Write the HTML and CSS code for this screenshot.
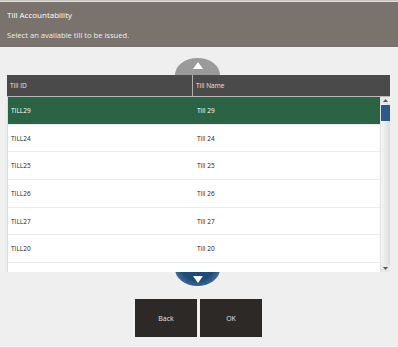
FILE: index.html
```html
<!DOCTYPE html>
<html>
<head>
<meta charset="utf-8">
<link rel="stylesheet" href="styles.css">
</head>
<body>
<div class="page">
  <div class="header">
    <div class="title">Till Accountability</div>
    <div class="subtitle">Select an available till to be issued.</div>
  </div>
  <div class="content">
    <div class="tablewrap">
      <div class="arrow up"><svg width="10" height="7" viewBox="0 0 10 7"><polygon points="5,0 10,7 0,7" fill="#fff"/></svg></div>
      <div class="arrow down"><svg width="10" height="7" viewBox="0 0 10 7"><polygon points="0,0 10,0 5,7" fill="#fff"/></svg></div>
      <div class="thead">
        <div class="th c1">Till ID</div>
        <div class="th c2">Till Name</div>
      </div>
      <div class="tbody">
        <div class="rows">
          <div class="row selected"><div class="td c1">TILL29</div><div class="td c2">Till 29</div></div>
          <div class="row"><div class="td c1">TILL24</div><div class="td c2">Till 24</div></div>
          <div class="row"><div class="td c1">TILL25</div><div class="td c2">Till 25</div></div>
          <div class="row"><div class="td c1">TILL26</div><div class="td c2">Till 26</div></div>
          <div class="row"><div class="td c1">TILL27</div><div class="td c2">Till 27</div></div>
          <div class="row"><div class="td c1">TILL20</div><div class="td c2">Till 20</div></div>
        </div>
        <div class="scrollbar">
          <div class="sbtn"><svg width="5" height="3" viewBox="0 0 5 3"><polygon points="2.5,0 5,3 0,3" fill="#555"/></svg></div>
          <div class="track"><div class="thumb"></div></div>
          <div class="sbtn"><svg width="5" height="3" viewBox="0 0 5 3"><polygon points="0,0 5,0 2.5,3" fill="#555"/></svg></div>
        </div>
      </div>
    </div>
    <div class="buttons">
      <div class="btn">Back</div>
      <div class="btn">OK</div>
    </div>
  </div>
</div>
</body>
</html>
```
FILE: styles.css
```css
html, body {
  margin: 0;
  padding: 0;
}
body {
  width: 398px;
  height: 348px;
  background: #efefef;
  font-family: "Open Sans", "DejaVu Sans", sans-serif;
  overflow: hidden;
}
.page {
  display: flex;
  flex-direction: column;
  height: 348px;
  border-top: 1px solid #c9c6c2;
  box-sizing: border-box;
}
.header {
  background: #7a726c;
  border-top: 1px solid #dcd9d5;
  height: 46px;
  box-sizing: border-box;
  padding: 7px 7px 0 7px;
  color: #fff;
}
.title {
  font-size: 8px;
  line-height: 11px;
}
.subtitle {
  font-size: 7.6px;
  line-height: 10px;
  margin-top: 10px;
  color: #f0eeec;
}
.content {
  flex: 1;
  display: flex;
  flex-direction: column;
  align-items: center;
  padding-top: 28px;
  border-bottom: 1px solid #d9d9d9;
}
.tablewrap {
  position: relative;
  width: 383px;
  margin-left: -1px;
  background: #fff;
}
.arrow {
  position: absolute;
  z-index: 1;
  left: 168px;
  width: 45px;
  height: 34px;
  border-radius: 50%;
  display: flex;
  justify-content: center;
  box-sizing: border-box;
}
.arrow.up {
  top: -17px;
  background: #9a9a9a;
  align-items: flex-start;
  padding-top: 4px;
}
.arrow.down {
  bottom: -14px;
  background: radial-gradient(ellipse at 50% 30%, #1d4c7b 55%, #6f8db0 100%);
  align-items: flex-end;
  padding-bottom: 3px;
}
.thead {
  position: relative;
  z-index: 2;
  display: flex;
  height: 22px;
  background: #4a4a4a;
  border-bottom: 1px solid #b8b8b8;
  box-sizing: border-box;
}
.th {
  color: #e8e8e8;
  font-size: 6.5px;
  line-height: 21px;
}
.c1 {
  width: 186px;
  padding-left: 3px;
  box-sizing: border-box;
}
.th.c1 {
  border-right: 1px solid #b0b0b0;
}
.c2 {
  flex: 1;
  padding-left: 3px;
}
.tbody {
  position: relative;
  z-index: 2;
  background: #fff;
  display: flex;
  height: 175px;
  overflow: hidden;
  border-left: 1px solid #dcdcdc;
}
.rows {
  flex: 1;
}
.row {
  display: flex;
  height: 27.7px;
  border-bottom: 1px solid #ececec;
  box-sizing: border-box;
  align-items: center;
}
.td {
  font-size: 6.5px;
  color: #222;
}
.row.selected {
  background: #2a6444;
}
.row.selected .td {
  color: #fff;
}
.scrollbar {
  width: 9px;
  display: flex;
  flex-direction: column;
  background: #f1f1f1;
  border-left: 1px solid #e0e0e0;
}
.sbtn {
  height: 7px;
  display: flex;
  align-items: center;
  justify-content: center;
  background: #e8e8e8;
}
.track {
  flex: 1;
  padding-top: 1px;
  background: linear-gradient(90deg, #f7f7f7, #dcdcdc);
}
.thumb {
  height: 16px;
  background: #2c5a8a;
}
.buttons {
  display: flex;
  gap: 3px;
  margin-top: 27px;
  margin-left: -1px;
}
.btn {
  width: 62px;
  height: 38px;
  background: #2d2926;
  color: #e6e6e6;
  font-size: 7px;
  display: flex;
  align-items: center;
  justify-content: center;
}
```
